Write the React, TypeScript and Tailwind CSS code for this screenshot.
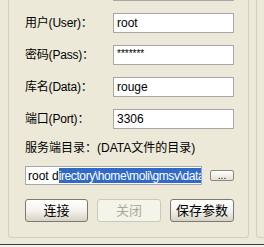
export default function App() {
  const rows = [
    { label: "用户(User)：", value: "root", small: false },
    { label: "密码(Pass)：", value: "*******", small: true },
    { label: "库名(Data)：", value: "rouge", small: false },
    { label: "端口(Port)：", value: "3306", small: false },
  ];

  return (
    <div
      className="w-[264px] h-[247px] bg-[#ece9d8] overflow-hidden flex flex-col text-[12px] text-black"
      style={{ fontFamily: '"Liberation Sans", "Noto Sans CJK SC", sans-serif' }}
    >
      <div className="flex h-[238px]">
        {/* left group box */}
        <div className="ml-[8px] w-[241px] h-full border-l border-r border-b border-[#d0d0bf] rounded-b-[4px] flex flex-col">
          {/* bottom edge of previous field */}
          <div className="ml-[104px] w-[121px] h-px bg-[#a8a8a8]" />

          <div className="flex flex-col gap-[12px] mt-[12px]">
            {rows.map((r) => (
              <div key={r.label} className="flex items-center h-[20px]">
                <div className="w-[104px] pl-[16px] leading-none tracking-[-0.2px]">{r.label}</div>
                <div className="w-[121px] h-[20px] bg-white border border-[#a8a8a8] flex items-center pl-[3px] leading-none">
                  {r.small ? <span className="text-[10px] -mt-[3px]">{r.value}</span> : r.value}
                </div>
              </div>
            ))}
          </div>

          <div className="mt-[12px] pl-[16px] h-[14px] leading-[14px]">
            服务端目录：(DATA文件的目录)
          </div>

          <div className="mt-[11px] pl-[16px] flex items-center gap-[8px]">
            <div className="w-[177px] h-[19px] bg-white border border-[#a8a8a8] overflow-hidden flex items-center pl-[2px] whitespace-nowrap leading-none">
              <span>root d</span>
              <span className="bg-[#316ac5] text-white h-[15px] flex items-center tracking-[-0.4px]">
                irectory\home\moli\gmsv\data
              </span>
            </div>
            <div className="w-[24px] h-[11px] rounded-[2px] border border-[#8a8a80] bg-gradient-to-b from-white to-[#e3e1d6] flex items-end justify-center text-[10px] leading-[9px]">
              ...
            </div>
          </div>

          <div className="mt-[14px] pl-[16px] flex gap-[9px]">
            <div className="w-[63px] h-[23px] rounded-[3px] border border-[#7a7a72] bg-gradient-to-b from-white via-[#f4f3ee] to-[#d6d3c6] flex items-center justify-center text-[13px]">
              连接
            </div>
            <div className="w-[64px] h-[23px] rounded-[3px] border border-[#cbc8bb] bg-[#f5f4ea] flex items-center justify-center text-[13px] text-[#aca899]">
              关闭
            </div>
            <div className="w-[64px] h-[23px] rounded-[3px] border border-[#7a7a72] bg-gradient-to-b from-white via-[#f4f3ee] to-[#d6d3c6] flex items-center justify-center text-[13px]">
              保存参数
            </div>
          </div>
        </div>

        {/* right group box edge */}
        <div className="ml-[7px] w-[8px] h-full border-l border-b border-[#d0d0bf] rounded-bl-[4px]" />
      </div>

      <div className="mt-[6px] h-px bg-[#3c3c3c]" />
      <div className="h-[2px] bg-[#f4f3ee]" />
    </div>
  );
}
